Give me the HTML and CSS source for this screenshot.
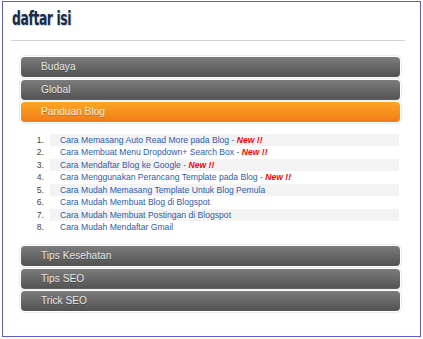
FILE: index.html
```html
<!DOCTYPE html>
<html>
<head>
<meta charset="utf-8">
<link rel="stylesheet" href="styles.css">
</head>
<body>
<div class="frame">
  <h2 class="title"><span class="title-text">daftar isi</span></h2>
  <div class="rule"></div>
  <div class="accordion">
    <div class="bar">Budaya</div>
    <div class="bar">Global</div>
    <div class="bar active">Panduan Blog</div>
    <ol class="posts">
      <li><span class="num">1.</span><span class="item"><a href="#">Cara Memasang Auto Read More pada Blog</a> - <b class="new">New !!</b></span></li>
      <li><span class="num">2.</span><span class="item"><a href="#">Cara Membuat Menu Dropdown+ Search Box</a> - <b class="new">New !!</b></span></li>
      <li><span class="num">3.</span><span class="item"><a href="#">Cara Mendaftar Blog ke Google</a> - <b class="new">New !!</b></span></li>
      <li><span class="num">4.</span><span class="item"><a href="#">Cara Menggunakan Perancang Template pada Blog</a> - <b class="new">New !!</b></span></li>
      <li><span class="num">5.</span><span class="item"><a href="#">Cara Mudah Memasang Template Untuk Blog Pemula</a></span></li>
      <li><span class="num">6.</span><span class="item"><a href="#">Cara Mudah Membuat Blog di Blogspot</a></span></li>
      <li><span class="num">7.</span><span class="item"><a href="#">Cara Mudah Membuat Postingan di Blogspot</a></span></li>
      <li><span class="num">8.</span><span class="item"><a href="#">Cara Mudah Mendaftar Gmail</a></span></li>
    </ol>
    <div class="bar">Tips Kesehatan</div>
    <div class="bar">Tips SEO</div>
    <div class="bar">Trick SEO</div>
  </div>
</div>
</body>
</html>
```

FILE: styles.css
```css
html, body {
  margin: 0;
  padding: 0;
  background: #fff;
}

.frame {
  margin: 1px 0 0 2px;
  width: 417px;
  height: 334px;
  border: 1px solid #5c5cd6;
  font-family: "Liberation Sans", Arial, sans-serif;
}

.title {
  margin: 0;
  padding: 5px 0 0 9px;
  font-family: "DejaVu Sans", sans-serif;
  font-stretch: condensed;
  font-weight: bold;
  font-size: 19px;
  line-height: 22px;
  letter-spacing: -0.5px;
  color: #1b2b45;
  text-shadow: 1px 1px 1px #b9cde6;
}

.title-text {
  display: inline-block;
  transform: scaleX(0.72);
  transform-origin: left center;
}

.rule {
  margin: 11px 0 0 8px;
  width: 394px;
  height: 1px;
  background: #d4d4d4;
}

.accordion {
  margin: 16px 0 0 18px;
  width: 379px;
}

.bar {
  height: 20px;
  margin-bottom: 2.5px;
  padding-left: 20px;
  border-radius: 4px;
  box-sizing: border-box;
  background: linear-gradient(#7c7c7c, #525252);
  box-shadow: 0 0 0 1px #fff, 0 0 1px 2px #ececec;
  color: #e6e6e6;
  font-size: 10.2px;
  line-height: 20px;
  text-shadow: 0 1px 0 rgba(0, 0, 0, 0.25);
}

.bar.active {
  background: linear-gradient(#fba622, #f27b1a);
  color: #fff1e0;
}

.posts {
  list-style: none;
  margin: 11.5px 1px 12.5px 9px;
  padding: 0;
  font-size: 8.6px;
  line-height: 12.5px;
}

.posts li {
  display: grid;
  grid-template-columns: 20px 1fr;
}

.num {
  padding-right: 6px;
  text-align: right;
  color: #444;
}

.item {
  padding-left: 10px;
  color: #3a5fa8;
}

.posts li:nth-child(odd) .item {
  background: #f3f3f3;
}

.item a {
  color: #2f5cae;
  text-decoration: none;
}

.new {
  color: #f00;
  font-style: italic;
}
```
